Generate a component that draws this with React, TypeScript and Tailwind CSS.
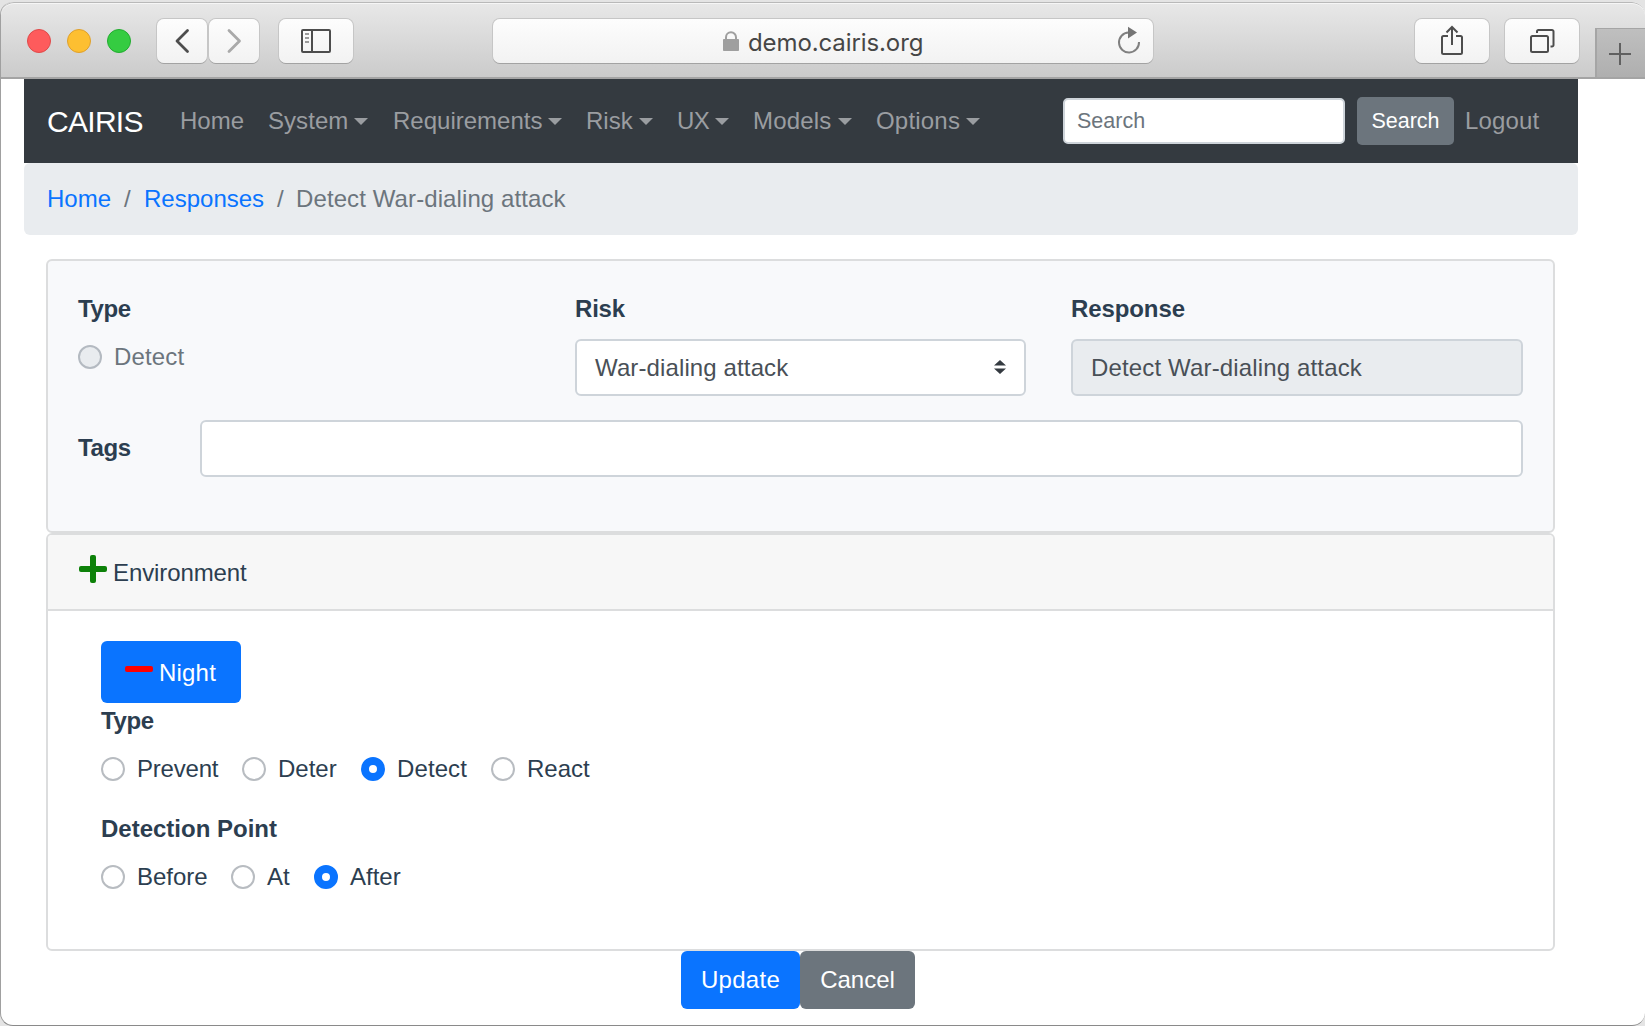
import React from "react";

function ToolButton({ className, children }: { className: string; children?: React.ReactNode }) {
  return (
    <div
      className={`flex h-[44px] shrink-0 items-center justify-center rounded-[7px] bg-linear-to-b from-[#fdfdfd] to-[#f2f2f2] shadow-[0_1px_0_#a3a3a3,0_0_0_1px_#c6c6c6] ${className}`}
    >
      {children}
    </div>
  );
}

function BrowserBar() {
  return (
    <div className="flex h-[77px] shrink-0 items-start rounded-t-[13px] border-t border-b-2 border-t-[#b9b9b9] border-b-[#a4a4a4] bg-linear-to-b from-[#e8e8e8] to-[#cbcbcb] pl-[26px] shadow-[inset_0_1px_0_#f6f6f6]">
      <div className="mt-[26px] flex gap-4">
        <span className="size-6 rounded-full border border-[#df4a4a] bg-[#fe5b5c]" />
        <span className="size-6 rounded-full border border-[#dfa02c] bg-[#fdbf31]" />
        <span className="size-6 rounded-full border border-[#22ac30] bg-[#35cc41]" />
      </div>
      <div className="mt-4 ml-[26px] flex gap-[2px]">
        <ToolButton className="w-[50px]">
          <svg width="50" height="44" viewBox="0 0 50 44" fill="none" stroke="#4d4d4d" strokeWidth="2.8" strokeLinecap="round" strokeLinejoin="round">
            <path d="M30.500 11.500 20 22l10.500 10.500" />
          </svg>
        </ToolButton>
        <ToolButton className="w-[50px]">
          <svg width="50" height="44" viewBox="0 0 50 44" fill="none" stroke="#a9a9a9" strokeWidth="2.800" strokeLinecap="round" strokeLinejoin="round">
            <path d="M20 11.500 30.500 22 20 32.500" />
          </svg>
        </ToolButton>
      </div>
      <ToolButton className="mt-4 ml-5 w-[74px]">
        <svg width="74" height="44" viewBox="0 0 74 44" fill="none" stroke="#4d4d4d" strokeWidth="2">
          <rect x="23" y="11" width="28" height="22" rx="1" />
          <path d="M33 11v22" />
          <path d="M26 15h4M26 19h4M26 23h4" stroke="#7c7c7c" strokeWidth="1.700" />
        </svg>
      </ToolButton>
      <ToolButton className="mt-4 ml-[140px] w-[660px]">
        <div className="flex h-full w-full items-center pl-[230px]">
          <svg width="16" height="20" viewBox="0 0 16 20">
            <rect x="0" y="8" width="16" height="12" rx="0.800" fill="#9f9f9f" />
            <path d="M3 9V6.300a5 5 0 0 1 10 0V9" fill="none" stroke="#9f9f9f" strokeWidth="2" />
          </svg>
          <span className="mt-[3px] ml-[9px] w-[360px] font-[Inter] text-[24px] leading-[36px] tracking-[-0.100px] text-[#464646]">demo.cairis.org</span>
          <svg width="26" height="30" viewBox="0 0 26 30" className="-mt-[3px] ml-[8px]">
            <path d="M12.500 7.500A10 10 0 1 0 23 17" fill="none" stroke="#808080" strokeWidth="2" />
            <path d="M12 1.800v11.600l9-5.800z" fill="#757575" />
          </svg>
        </div>
      </ToolButton>
      <ToolButton className="mt-4 ml-[262px] w-[74px]">
        <svg width="74" height="44" viewBox="0 0 74 44" fill="none" stroke="#4d4d4d" strokeWidth="2">
          <path d="M33 17h-4.500a1.500 1.500 0 0 0-1.500 1.500v15a1.500 1.500 0 0 0 1.500 1.500h17a1.500 1.500 0 0 0 1.500-1.500v-15a1.500 1.500 0 0 0-1.500-1.500H41" />
          <path d="M37 26V8M31.500 13.500 37 8l5.500 5.500" />
        </svg>
      </ToolButton>
      <ToolButton className="mt-4 ml-4 w-[74px]">
        <svg width="74" height="44" viewBox="0 0 74 44" fill="none" stroke="#4d4d4d" strokeWidth="2">
          <rect x="26" y="17" width="17" height="16" rx="1.500" />
          <path d="M32 14v-1.500a1.500 1.500 0 0 1 1.500-1.500H47a1.500 1.500 0 0 1 1.500 1.500V26a1.500 1.500 0 0 1-1.500 1.500h-1.500" />
        </svg>
      </ToolButton>
      <div className="mt-[25px] ml-4 flex h-[49px] flex-1 items-center border-t border-l-2 border-[#a5a5a5] bg-linear-to-b from-[#bfbfbf] to-[#afafaf] pl-3">
        <svg width="22" height="22" viewBox="0 0 22 22" className="mt-px" stroke="#606060" strokeWidth="2">
          <path d="M11 0v22M0 11h22" />
        </svg>
      </div>
    </div>
  );
}

function NavItem({ label, caret, className }: { label: string; caret?: boolean; className: string }) {
  return (
    <div className={`flex shrink-0 items-center ${className}`}>
      <span>{label}</span>
      {caret && <span className="mt-px ml-[6px] border-x-[7px] border-t-[7px] border-x-transparent border-t-[#9a9da1]" />}
    </div>
  );
}

function Navbar() {
  return (
    <nav className="flex h-[84px] items-center bg-[#343a40] pl-[23px] text-[#9a9da1]">
      <span className="w-[133px] text-[30px] leading-[45px] tracking-[-0.700px] text-white">CAIRIS</span>
      <NavItem label="Home" className="w-[88px]" />
      <NavItem label="System" caret className="w-[125px] tracking-[0.050px]" />
      <NavItem label="Requirements" caret className="w-[193px]" />
      <NavItem label="Risk" caret className="w-[91px]" />
      <NavItem label="UX" caret className="w-[76px] tracking-[-0.700px]" />
      <NavItem label="Models" caret className="w-[123px] tracking-[0.200px]" />
      <NavItem label="Options" caret className="w-[187px] tracking-[0.200px]" />
      <div className="flex h-[46px] w-[282px] items-center rounded-[5px] border-2 border-[#ced4da] bg-white pl-3 text-[21.500px] text-[#6c757d]">Search</div>
      <button className="ml-3 flex h-12 w-[97px] items-center justify-center rounded-[5px] bg-[#6c757d] text-[21.500px] text-white">Search</button>
      <span className="ml-[11px] tracking-[0.150px]">Logout</span>
    </nav>
  );
}

function Radio({ label, checked, disabled, className = "" }: { label: string; checked?: boolean; disabled?: boolean; className?: string }) {
  const ring = checked
    ? "border-[8px] border-[#0a74ff] bg-white"
    : disabled
      ? "border-2 border-[#b4bac1] bg-[#e9ecef]"
      : "border-2 border-[#b8bcc1] bg-white";
  return (
    <div className={`flex h-9 shrink-0 items-center gap-3 ${disabled ? "text-[#6c757d]" : ""} ${className}`}>
      <span className={`size-6 rounded-full ${ring}`} />
      <span>{label}</span>
    </div>
  );
}

export default function App() {
  return (
    <div className="h-[1026px] w-[1645px] overflow-hidden bg-[#e4e4e4] pt-[2px] font-['Liberation_Sans',Arial,sans-serif] text-[24px] leading-[36px] text-[#2c3e50]">
      <div className="flex h-[1024px] flex-col overflow-hidden rounded-[13px] border-b border-l border-b-[#8a8a8a] border-l-[#a0a0a0] bg-white">
        <BrowserBar />
        <div className="ml-[23px] w-[1554px]">
          <Navbar />
          <div className="flex h-[72px] items-center rounded-[6px] bg-[#e9ecef] pl-[23px] text-[#6c757d]">
            <span className="w-[77px] text-[#0a74ff]">Home</span>
            <span className="w-[20px]">/</span>
            <span className="w-[133px] text-[#0a74ff]">Responses</span>
            <span className="w-[19px]">/</span>
            <span className="tracking-[0.100px]">Detect War-dialing attack</span>
          </div>
          <main className="mx-[22px] mt-6 w-[1509px]">
            <section className="h-[274px] rounded-[6px] border-2 border-[#dcddde] bg-[#f8f9fb] px-[30px] pt-[30px]">
              <div className="flex h-[129px]">
                <div className="w-[497px]">
                  <div className="font-bold tracking-[-0.400px]">Type</div>
                  <Radio label="Detect" disabled className="mt-[12px] tracking-[0.150px]" />
                </div>
                <div className="w-[496px]">
                  <div className="font-bold tracking-[-0.200px]">Risk</div>
                  <div className="mt-3 flex h-[57px] w-[451px] items-center justify-between rounded-[6px] border-2 border-[#ced4da] bg-white pr-[18px] pl-[18px] text-[#495057]">
                    <span className="tracking-[0.120px]">War-dialing attack</span>
                    <svg width="12" height="14" viewBox="0 0 12 14" fill="#343a40" className="-mt-px">
                      <path d="M0 5.500 6 0l6 5.500zM0 8.500h12L6 14z" />
                    </svg>
                  </div>
                </div>
                <div className="w-[452px]">
                  <div className="font-bold tracking-[-0.100px]">Response</div>
                  <div className="mt-3 flex h-[57px] items-center rounded-[6px] border-2 border-[#ced4da] bg-[#e9ecef] pl-[18px] tracking-[0.150px] text-[#495057]">Detect War-dialing attack</div>
                </div>
              </div>
              <div className="flex items-center">
                <div className="-mt-[2px] w-[122px] font-bold tracking-[-0.400px]">Tags</div>
                <div className="h-[57px] w-[1323px] rounded-[6px] border-2 border-[#ced4da] bg-white" />
              </div>
            </section>
            <section className="h-[418px] rounded-[6px] border-2 border-[#dcddde] bg-white">
              <div className="flex h-[76px] items-center rounded-t-[4px] border-b-2 border-[#dcddde] bg-[#f7f7f7] pl-[31px]">
                <svg width="28" height="28" viewBox="0 0 28 28" className="-mt-[7px]" fill="#0d8109">
                  <rect x="0" y="11" width="28" height="6" rx="2" />
                  <rect x="11" y="0" width="6" height="28" rx="2" />
                </svg>
                <span className="mt-[2px] ml-[6px] tracking-[-0.100px]">Environment</span>
              </div>
              <div className="pt-[30px] pl-[53px]">
                <button className="flex h-[62px] w-[140px] items-center rounded-[6px] bg-[#0a74ff] pl-6 text-white">
                  <span className="-mt-[6px] h-[6px] w-7 rounded-[2px] bg-[#fe0000]" />
                  <span className="mt-[2px] ml-[6px] tracking-[0.200px]">Night</span>
                </button>
                <div className="font-bold tracking-[-0.400px]">Type</div>
                <div className="mt-3 flex">
                  <Radio label="Prevent" className="w-[141px] tracking-[-0.200px]" />
                  <Radio label="Deter" className="w-[119px]" />
                  <Radio label="Detect" checked className="w-[130px] tracking-[0.100px]" />
                  <Radio label="React" />
                </div>
                <div className="mt-6 font-bold">Detection Point</div>
                <div className="mt-3 flex">
                  <Radio label="Before" className="w-[130px]" />
                  <Radio label="At" className="w-[83px]" />
                  <Radio label="After" checked />
                </div>
              </div>
            </section>
            <div className="flex pl-[635px] text-white">
              <button className="h-[58px] w-[119px] rounded-[6px] bg-[#0a74ff] tracking-[0.300px]">Update</button>
              <button className="h-[58px] w-[115px] rounded-[6px] bg-[#6c757d]">Cancel</button>
            </div>
          </main>
        </div>
      </div>
    </div>
  );
}
